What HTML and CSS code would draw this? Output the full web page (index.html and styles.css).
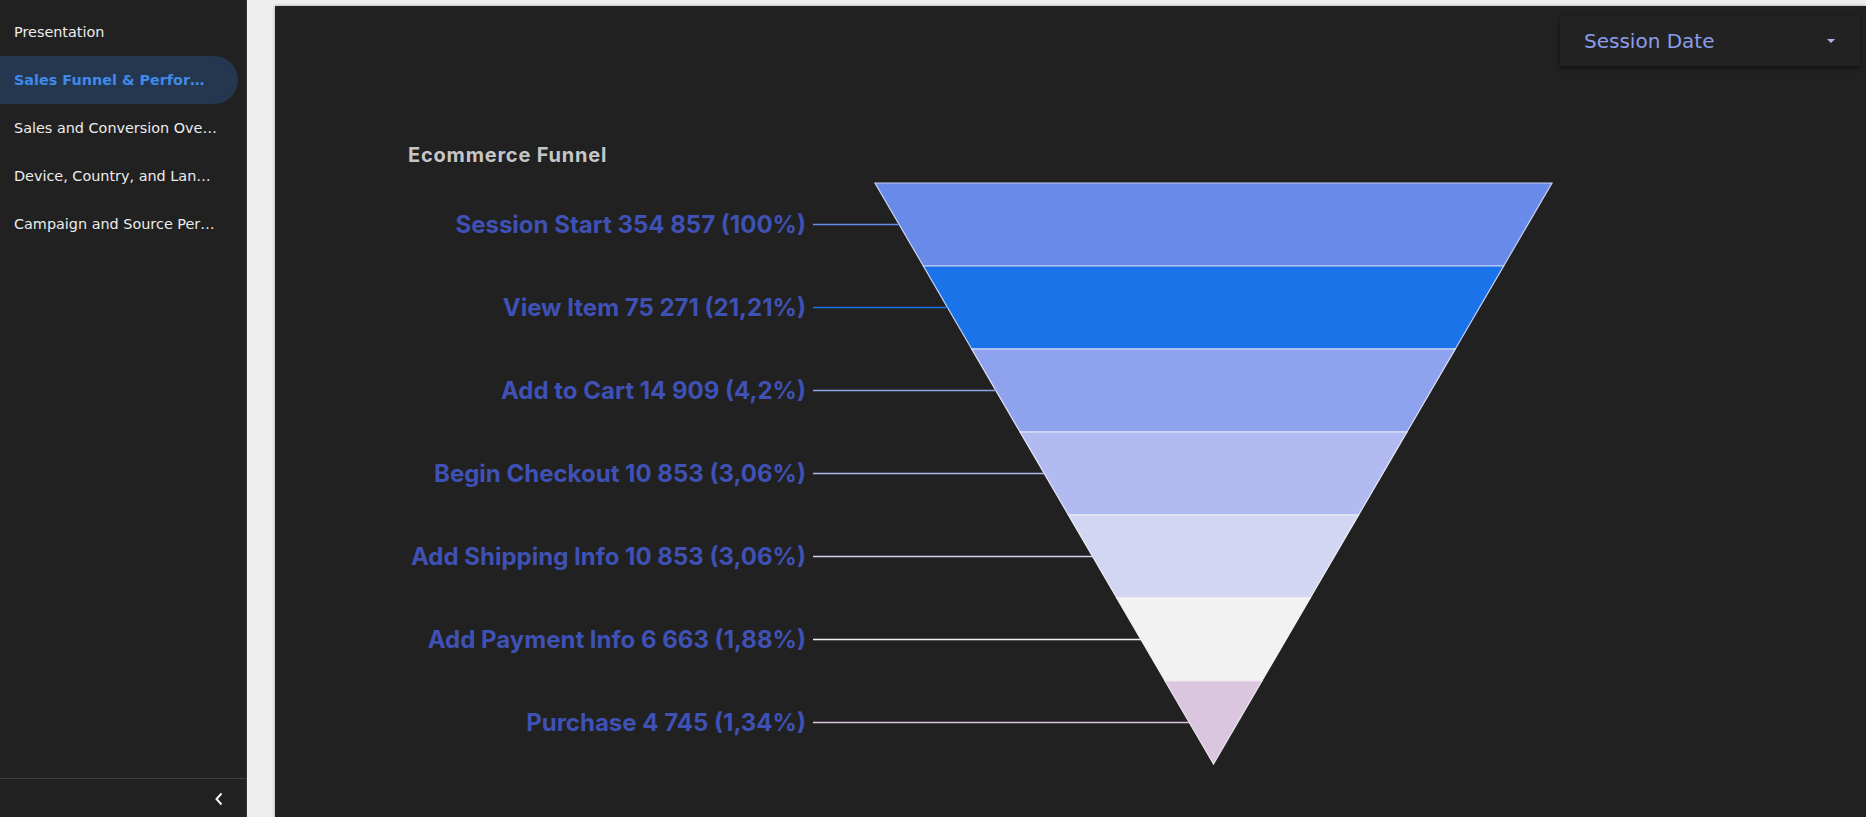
FILE: index.html
```html
<!DOCTYPE html>
<html>
<head>
<meta charset="utf-8">
<link rel="stylesheet" href="styles.css">
</head>
<body>
<div class="app">
  <aside class="sidebar">
    <nav class="nav">
      <div class="nav-item">Presentation</div>
      <div class="nav-item active">Sales Funnel &amp; Performance</div>
      <div class="nav-item">Sales and Conversion Overview</div>
      <div class="nav-item">Device, Country, and Landing Page</div>
      <div class="nav-item">Campaign and Source Performance</div>
    </nav>
    <div class="side-footer">
      <svg class="chev" width="10" height="14" viewBox="0 0 10 14"><path d="M7.5 1.5 L2.5 7 L7.5 12.5" fill="none" stroke="#f4f4f4" stroke-width="2"/></svg>
    </div>
  </aside>
  <main class="main">
    <section class="panel">
      <div class="toolbar">
        <div class="dropdown">
          <span class="dd-label">Session Date</span>
          <span class="dd-caret"></span>
        </div>
      </div>
      <div class="chart">
        <div class="chart-title">Ecommerce Funnel</div>
        <svg class="funnel" width="1200" height="647" viewBox="0 0 1200 647">
          <g stroke-width="1.2">
            <polygon points="473,13 1150,13 1101.64,96 521.36,96" fill="#688ae9" stroke="#c9d2f5"/>
            <polygon points="521.36,96 1101.64,96 1053.29,179 569.71,179" fill="#1a73e8" stroke="#c9d2f5"/>
            <polygon points="569.71,179 1053.29,179 1004.93,262 618.07,262" fill="#8fa2ee" stroke="#dde2f8"/>
            <polygon points="618.07,262 1004.93,262 956.57,345 666.43,345" fill="#b1bbf1" stroke="#e6e9f8"/>
            <polygon points="666.43,345 956.57,345 908.21,428 714.79,428" fill="#d3d6f3" stroke="#eeeff8"/>
            <polygon points="714.79,428 908.21,428 859.86,511 763.14,511" fill="#f2f2f2" stroke="#f4f4f4"/>
            <polygon points="763.14,511 859.86,511 811.5,594" fill="#dac6df" stroke="#ece4ee"/>
          </g>
          <g stroke-width="1.3">
            <line x1="411" y1="54.5" x2="497.2" y2="54.5" stroke="#688ae9"/>
            <line x1="411" y1="137.5" x2="545.5" y2="137.5" stroke="#1a73e8"/>
            <line x1="411" y1="220.5" x2="593.9" y2="220.5" stroke="#8fa2ee"/>
            <line x1="411" y1="303.5" x2="642.3" y2="303.5" stroke="#b1bbf1"/>
            <line x1="411" y1="386.5" x2="690.6" y2="386.5" stroke="#d3d6f3"/>
            <line x1="411" y1="469.5" x2="739" y2="469.5" stroke="#f2f2f2"/>
            <line x1="411" y1="552.5" x2="787.3" y2="552.5" stroke="#dac6df"/>
          </g>
          <g class="labels" text-anchor="end">
            <text x="404" y="63">Session Start 354 857 (100%)</text>
            <text x="404" y="146">View Item 75 271 (21,21%)</text>
            <text x="404" y="229">Add to Cart 14 909 (4,2%)</text>
            <text x="404" y="312">Begin Checkout 10 853 (3,06%)</text>
            <text x="404" y="395">Add Shipping Info 10 853 (3,06%)</text>
            <text x="404" y="478">Add Payment Info 6 663 (1,88%)</text>
            <text x="404" y="561">Purchase 4 745 (1,34%)</text>
          </g>
        </svg>
      </div>
    </section>
  </main>
</div>
</body>
</html>
```
FILE: styles.css
```css
html, body {
  margin: 0;
  padding: 0;
  height: 100%;
  overflow: hidden;
}
body {
  background: #eeeeee;
  font-family: "DejaVu Sans", Verdana, sans-serif;
}
.app {
  display: flex;
  height: 100vh;
}
.sidebar {
  width: 246px;
  flex: 0 0 246px;
  background: #212121;
  border-right: 1px solid #3a3a3a;
  display: flex;
  flex-direction: column;
}
.nav {
  flex: 1;
  padding-top: 8px;
}
.nav-item {
  height: 48px;
  line-height: 48px;
  width: 238px;
  box-sizing: border-box;
  padding-left: 14px;
  padding-right: 20px;
  font-size: 14.4px;
  color: #ececec;
  white-space: nowrap;
  overflow: hidden;
  text-overflow: ellipsis;
}
.nav-item.active {
  background: #24374f;
  color: #3f8ae8;
  font-weight: bold;
  border-radius: 0 24px 24px 0;
  padding-right: 32px;
}
.side-footer {
  height: 38px;
  border-top: 1px solid #3e3e3e;
  display: flex;
  align-items: center;
  justify-content: flex-end;
  padding-right: 22px;
}
.chev {
  display: block;
  margin-top: 2px;
}
.main {
  flex: 1;
  padding: 6px 0 0 28px;
  min-width: 0;
}
.panel {
  background: #212121;
  height: 100%;
  box-shadow: 0 0 3px rgba(0,0,0,0.35);
  display: flex;
  flex-direction: column;
  overflow: hidden;
}
.toolbar {
  display: flex;
  justify-content: flex-end;
  padding: 10px 6px 0 0;
}
.dropdown {
  width: 300px;
  height: 50px;
  box-sizing: border-box;
  background: #222222;
  box-shadow: 0 2px 4px rgba(0,0,0,0.55);
  display: flex;
  align-items: center;
  justify-content: space-between;
  padding: 0 25px 0 24px;
}
.dd-label {
  font-family: "DejaVu Sans", Verdana, sans-serif;
  font-size: 20px;
  color: #8c9eea;
}
.dd-caret {
  width: 0;
  height: 0;
  border-left: 4px solid transparent;
  border-right: 4px solid transparent;
  border-top: 4px solid #a9b5f0;
}
.chart {
  margin: 79px 0 0 127px;
  display: flex;
  flex-direction: column;
}
.chart-title {
  font-family: Inter, "Open Sans", sans-serif;
  font-weight: 700;
  font-size: 20px;
  letter-spacing: 0.8px;
  line-height: 20px;
  height: 20px;
  padding-left: 6px;
  color: #c6c6c6;
  margin-bottom: 5px;
}
.funnel {
  display: block;
  overflow: hidden;
}
.labels text {
  font-family: Inter, "Open Sans", sans-serif;
  font-weight: 700;
  font-size: 24px;
  fill: #3f51b5;
}
```
